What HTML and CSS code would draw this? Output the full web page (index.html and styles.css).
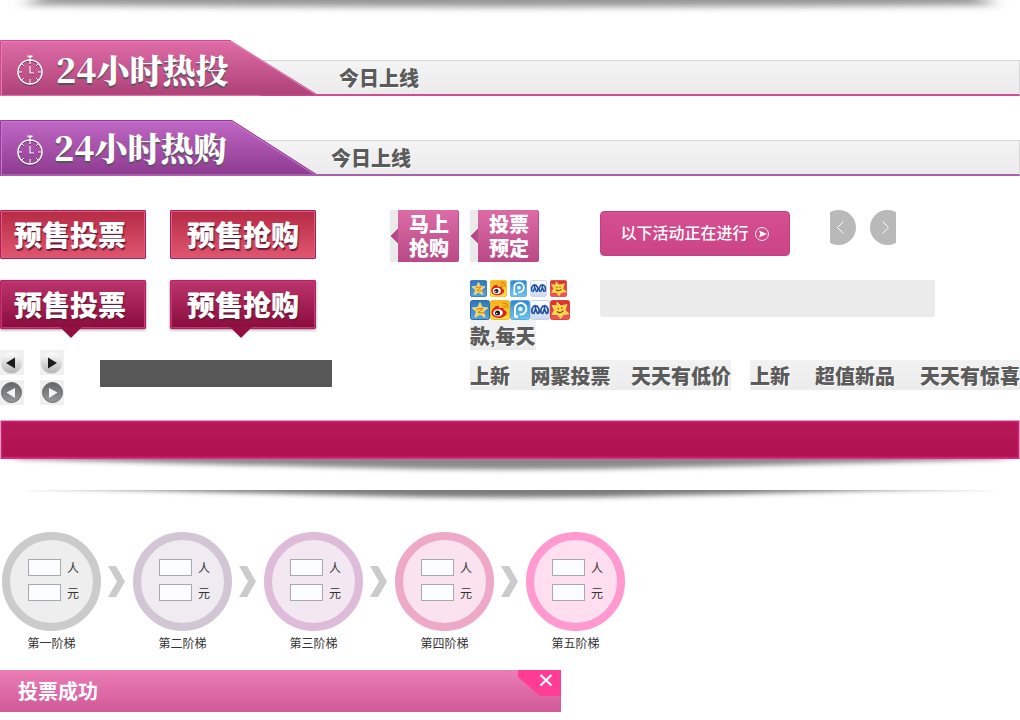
FILE: index.html
```html
<!DOCTYPE html>
<html lang="zh-CN">
<head>
<meta charset="utf-8">
<title>投票活动</title>
<link rel="stylesheet" href="styles.css">
</head>
<body>
<svg class="defs" aria-hidden="true">
  <defs>
    <linearGradient id="pink" x2="0" y2="1"><stop stop-color="#df6da7"/><stop offset="1" stop-color="#ae4178"/></linearGradient>
    <linearGradient id="purple" x2="0" y2="1"><stop stop-color="#c068c5"/><stop offset="1" stop-color="#8e3a90"/></linearGradient>
    <linearGradient id="blue" x2="0" y2="1"><stop stop-color="#2f76b8"/><stop offset="1" stop-color="#5ba3d8"/></linearGradient>
    <linearGradient id="sky" x2="0" y2="1"><stop stop-color="#2d86cf"/><stop offset="1" stop-color="#6fc6f0"/></linearGradient>
    <linearGradient id="yellow" x2="0" y2="1"><stop stop-color="#f5b01c"/><stop offset="1" stop-color="#ffe23a"/></linearGradient>
    <linearGradient id="red" x2="0" y2="1"><stop stop-color="#d9332b"/><stop offset="1" stop-color="#f0584e"/></linearGradient>
    <linearGradient id="pale" x2="0" y2="1"><stop stop-color="#fff"/><stop offset="1" stop-color="#c9d9f3"/></linearGradient>
    <linearGradient id="silver" x2="0" y2="1"><stop stop-color="#fff"/><stop offset="1" stop-color="#b4b4b4"/></linearGradient>
    <linearGradient id="steel" x2="0" y2="1"><stop stop-color="#666"/><stop offset="1" stop-color="#989898"/></linearGradient>
    <filter id="soft" x="-5%" y="-60%" width="110%" height="220%"><feGaussianBlur stdDeviation="9 3.5"/></filter>
    <filter id="thin" x="-5%" y="-60%" width="110%" height="220%"><feGaussianBlur stdDeviation="6 2.5"/></filter>
    <symbol id="watch" viewBox="0 0 28 32">
      <g fill="none" stroke="#fff">
        <circle cx="14" cy="18" r="12" stroke-width="1.500"/>
        <path d="M14 3v7M14 12v7h4" stroke-width="1.200"/>
        <path d="M14 25v4M3 18h3M22 18h3M6 10l2 2M22 10l-2 2M6 26l2-2M22 26l-2-2" stroke-width="1"/>
      </g>
      <path d="M11.500 1.500h5v2h-5z" fill="#fff"/>
    </symbol>
    <symbol id="qzone" viewBox="0 0 20 20">
      <rect x=".5" y=".5" width="19" height="19" rx="2" fill="url(#blue)" stroke="#2a6cab"/>
      <path d="M10 2.500l2.200 5 5.600.4-4.200 3.700 1.400 5.700-5-3-5 3 1.400-5.700L2.200 7.900l5.600-.4z" fill="#fdd04c" stroke="#fff0b0" stroke-width=".7"/>
      <path d="M6.500 9.300q4-1.400 6.500-.8l-5 4q3 .8 7 .2" fill="none" stroke="#c77c18"/>
    </symbol>
    <symbol id="weibo" viewBox="0 0 20 20">
      <rect x=".5" y=".5" width="19" height="19" rx="2" fill="url(#yellow)" stroke="#f3bd20"/>
      <path d="M1.500 12.500C1.500 9 6 5 8.300 5.800c1.200.4 1 1.600.600 2.500 2.200-.9 5.300-1 5 1.600 6 2 1.500 8-5.400 8-3.800 0-7-2.200-7-5.400z" fill="#d9231c"/>
      <ellipse cx="8" cy="12.800" rx="4.800" ry="3.600" fill="#fff"/><circle cx="7.500" cy="13" r="2.500" fill="#161616"/><circle cx="6.800" cy="13.500" r=".8" fill="#fff"/>
      <path d="M12.500 3.200c3.500-.7 6 1.800 5 5M13 6c1.500-.3 2.500.6 2.200 2" fill="none" stroke="#e58612" stroke-width="1.300"/>
    </symbol>
    <symbol id="tweet" viewBox="0 0 20 20">
      <rect x=".5" y=".5" width="19" height="19" rx="2" fill="url(#sky)" stroke="#5da9df"/>
      <path d="M5 16.500V9.500A5.700 5.700 0 1 1 10.500 14.500" fill="none" stroke="#fff" stroke-width="2" stroke-linecap="round"/>
      <circle cx="10.500" cy="9" r="2.300" fill="#dff3ff"/><circle cx="6.500" cy="16.500" r="1.500" fill="#fff"/>
    </symbol>
    <symbol id="friends" viewBox="0 0 20 20">
      <rect x=".5" y=".5" width="19" height="19" rx="2" fill="url(#pale)" stroke="#c3d1ec"/>
      <g fill="none" stroke="#1f4f9c" stroke-width="1.700" stroke-linecap="round">
        <path d="M4 6Q.8 9 2.300 13M5.500 5.500v3.500L3.900 13.500M5.500 9L7.600 13.500M7 6q3.200 3 1.800 7M13 6q-3 3-1.800 7M14.500 5.500v3.500L12.800 13.500M14.500 9L16.400 13.500M16 6q3.200 3 1.700 7"/>
      </g>
    </symbol>
    <symbol id="kaixin" viewBox="0 0 20 20">
      <rect x=".5" y=".5" width="19" height="19" rx="2" fill="url(#red)" stroke="#dc443c"/>
      <path d="M7 2l4 4 6-1.500-2 5.500 4 4-5.500.5L10.500 18.500 7.500 14.500 2 14.500 4.500 10 2 5.500l5 .3z" fill="#ffd83d" stroke="#ffe98a" stroke-width=".8" stroke-linejoin="round"/>
      <path d="M8.300 8v1.500M11.800 7.500V9M7 11.500q3.500 2.500 6.500-.8" fill="none" stroke="#7b3d08" stroke-width="1.200"/>
    </symbol>
    <symbol id="step-arrow" viewBox="0 0 17 31"><path d="M0 0h8l9 15.500L8 31H0l9-15.500z" fill="#cbcbcb"/></symbol>
  </defs>
</svg>

<svg class="shade shade-top" viewBox="0 0 1020 18" preserveAspectRatio="none" aria-hidden="true"><path d="M24 5Q50-10 100-14H920Q970-10 996 5Q750 7 510 7T24 5z" fill="#959595" filter="url(#soft)"/></svg>

<main>
  <section class="banner banner-pink">
    <div class="tab">
      <svg class="tab-bg" viewBox="0 0 320 56" aria-hidden="true"><path d="M.5 55.500V.5H231L319 55.500z" fill="url(#pink)"/><path d="M1.500 55V1.500H230.500L317 55.500" fill="none" stroke="#e57fb2"/><path d="M0 55h320M.5 55V.5H231" fill="none" stroke="#d4488b"/></svg>
      <svg class="watch" aria-hidden="true"><use href="#watch"/></svg>
      <h2>24小时热投</h2>
    </div>
    <div class="strip"><h3>今日上线</h3></div>
  </section>
  <section class="banner banner-purple">
    <div class="tab">
      <svg class="tab-bg" viewBox="0 0 320 56" aria-hidden="true"><path d="M.5 55.500V.5H232L318 55.500z" fill="url(#purple)" stroke="#963a9a"/><path d="M1.500 55V1.500H231.500L316 55.500" fill="none" stroke="#c47bc9"/><path d="M0 55h320" stroke="#a95fab" stroke-width="2"/></svg>
      <svg class="watch" aria-hidden="true"><use href="#watch"/></svg>
      <h2>24小时热购</h2>
    </div>
    <div class="strip"><h3>今日上线</h3></div>
  </section>

  <div class="board">
    <div class="left">
      <div class="pair"><button class="sale">预售投票</button><button class="sale">预售抢购</button></div>
      <div class="pair"><button class="sale sale-on">预售投票</button><button class="sale sale-on">预售抢购</button></div>
      <div class="tools">
        <div class="round-grid">
          <button class="round" aria-label="上一个"><svg viewBox="0 0 24 25"><circle cx="11.500" cy="13" r="10.500" fill="url(#silver)"/><path d="M15 7.500v11L6 13z" fill="#1c1c1c"/></svg></button>
          <button class="round" aria-label="下一个"><svg viewBox="0 0 24 25"><circle cx="11.500" cy="13" r="10.500" fill="url(#silver)"/><path d="M8 7.500v11L17 13z" fill="#1c1c1c"/></svg></button>
          <button class="round" aria-label="向前"><svg viewBox="0 0 24 25"><circle cx="11.500" cy="12.500" r="10" fill="url(#steel)" stroke="#6c6c6c"/><path d="M15 8v10L6.500 12.500z" fill="#f3f7f9"/></svg></button>
          <button class="round" aria-label="向后"><svg viewBox="0 0 24 25"><circle cx="12.500" cy="12.500" r="10" fill="url(#steel)" stroke="#6c6c6c"/><path d="M9 8v10l8.500-5.500z" fill="#f3f7f9"/></svg></button>
        </div>
        <div class="dark"></div>
      </div>
    </div>

    <div class="right">
      <div class="actions">
        <button class="mini">马上<br>抢购</button>
        <button class="mini">投票<br>预定</button>
        <button class="going">以下活动正在进行<svg viewBox="0 0 16 16" aria-hidden="true"><circle cx="8" cy="8" r="6.500" fill="none" stroke="#fff" stroke-width=".9"/><path d="M5 4.500l8 3.500-8 3.500L6.300 8z" fill="#fff"/></svg></button>
        <button class="page" aria-label="上一页"><svg viewBox="0 0 26 35"><circle cx="8.500" cy="17.500" r="17.500" fill="#b9b9b9"/><path d="M13.500 11.500L7.500 17.500l6 6" fill="none" stroke="#fff"/></svg></button>
        <button class="page" aria-label="下一页"><svg viewBox="0 0 26 35"><circle cx="17.500" cy="17.500" r="17.500" fill="#b9b9b9"/><path d="M12.500 11.500l6 6-6 6" fill="none" stroke="#fff"/></svg></button>
      </div>
      <div class="share">
        <div>
          <div class="icons small">
            <svg><use href="#qzone"/></svg><svg><use href="#weibo"/></svg><svg><use href="#tweet"/></svg><svg><use href="#friends"/></svg><svg><use href="#kaixin"/></svg>
          </div>
          <div class="icons">
            <svg><use href="#qzone"/></svg><svg><use href="#weibo"/></svg><svg><use href="#tweet"/></svg><svg><use href="#friends"/></svg><svg><use href="#kaixin"/></svg>
          </div>
          <span class="caption">款,每天</span>
        </div>
        <div class="light"></div>
      </div>
      <div class="slogans">
        <p class="caption"><span>上新</span><span>网聚投票</span><span>天天有低价</span></p>
        <p class="caption"><span>上新</span><span>超值新品</span><span>天天有惊喜</span></p>
      </div>
    </div>
  </div>

  <div class="nav-bar"></div>
  <svg class="shade shade-nav" viewBox="0 0 1020 20" preserveAspectRatio="none" aria-hidden="true"><path d="M15-14V0Q150 4 330 8Q510 13 690 8Q870 4 1005 0V-14z" fill="#8a8a8a" filter="url(#thin)"/></svg>
  <svg class="shade" viewBox="0 0 1020 18" preserveAspectRatio="none" aria-hidden="true"><path d="M30-14V-3Q170 1 330 5Q510 10 690 5Q850 1 990-3V-14z" fill="#7c7c7c" filter="url(#thin)"/></svg>

  <ol class="steps">
    <li class="step s1"><div class="disc"><label><input type="text">人</label><label><input type="text">元</label></div><p>第一阶梯</p><svg aria-hidden="true"><use href="#step-arrow"/></svg></li>
    <li class="step s2"><div class="disc"><label><input type="text">人</label><label><input type="text">元</label></div><p>第二阶梯</p><svg aria-hidden="true"><use href="#step-arrow"/></svg></li>
    <li class="step s3"><div class="disc"><label><input type="text">人</label><label><input type="text">元</label></div><p>第三阶梯</p><svg aria-hidden="true"><use href="#step-arrow"/></svg></li>
    <li class="step s4"><div class="disc"><label><input type="text">人</label><label><input type="text">元</label></div><p>第四阶梯</p><svg aria-hidden="true"><use href="#step-arrow"/></svg></li>
    <li class="step s5"><div class="disc"><label><input type="text">人</label><label><input type="text">元</label></div><p>第五阶梯</p></li>
  </ol>

  <header class="dialog">
    <h2>投票成功</h2>
    <button class="close" aria-label="关闭"><svg viewBox="0 0 43 26"><path d="M0 0h43v26H22L0 7z" fill="#ff3d97"/><path d="M22.500 5l11 10.500M33.500 5l-11 10.500" stroke="#fff" stroke-width="2.200"/></svg></button>
  </header>
</main>
</body>
</html>
```
FILE: styles.css
```css
* { box-sizing: border-box; }
body {
  margin: 0;
  background: #fff;
  color: #333;
  font-family: "Liberation Sans", "Noto Sans CJK SC", sans-serif;
  font-size: 12px;
}
h2, h3, p, ol { margin: 0; padding: 0; list-style: none; }
button { padding: 0; border: 0; background: none; color: #fff; font-family: inherit; cursor: pointer; }
svg { display: block; }
.defs { position: absolute; width: 0; height: 0; }

.shade { width: 100%; height: 18px; overflow: hidden; }
.shade-top { margin-bottom: 22px; }
.shade-nav { height: 20px; margin-bottom: 11px; }

.banner { display: flex; align-items: flex-end; height: 56px; margin-bottom: 24px; }
.tab { position: relative; z-index: 1; display: flex; width: 320px; height: 56px; padding-left: 16px; }
.tab-bg { position: absolute; inset: 0; width: 320px; height: 56px; }
.watch { position: relative; width: 28px; height: 32px; margin-top: 14px; filter: drop-shadow(0 1px 0 #0006); }
.tab h2 {
  position: relative;
  margin-left: 12px;
  color: #fff;
  font-family: "Noto Serif CJK SC", "Noto Sans CJK SC", serif;
  font-size: 33px;
  font-weight: 900;
  line-height: 58px;
  white-space: nowrap;
  text-shadow: 0 2px 1px #555;
}
.banner-purple h2 { margin-left: 10px; line-height: 54px; }
.strip {
  flex: 1;
  height: 36px;
  margin-left: -60px;
  padding-left: 78px;
  border: 1px solid #d8d8d8;
  border-bottom: 2px solid #d04d8f;
  background: linear-gradient(#f4f4f4, #ebebeb);
}
.banner-purple .strip { padding-left: 70px; border-bottom-color: #a95fab; }
.strip h3, .caption {
  color: #5b5b5b;
  font-size: 20px;
  font-weight: 900;
  line-height: 36px;
  text-shadow: 1px 1px 0 #fff;
  white-space: nowrap;
}

.board { display: grid; grid-template-columns: 390px 1fr; height: 200px; margin: 34px 0 10px; }
.pair { display: flex; gap: 24px; margin-bottom: 21px; }
.sale {
  position: relative;
  width: 146px;
  height: 49px;
  padding: 4px 6px 0 0;
  border: 1px solid #b51855;
  border-radius: 1px;
  background: linear-gradient(#b52b45, #e0566e);
  box-shadow: inset 0 0 0 1px #d95f7d;
  font-size: 28px;
  font-weight: 900;
  line-height: 43px;
  text-shadow: 1px 2px 1px #6b1a35;
}
.sale:last-child { padding-right: 0; }
.sale-on {
  border-color: #c2185f;
  background: linear-gradient(#bb346c, #8b0c3d);
  box-shadow: inset 0 0 0 1px #b93d76, 0 1px 3px #0006;
}
.sale-on::after {
  content: "";
  position: absolute;
  top: 46px;
  left: 59px;
  width: 22px;
  height: 11px;
  background: #940f43;
  clip-path: polygon(0 0, 100% 0, 50% 100%);
}
.tools { display: flex; gap: 36px; }
.round-grid { display: grid; grid-template-columns: 24px 24px; gap: 5px 16px; }
.round { width: 24px; height: 25px; background: #f0f0f0; }
.dark { width: 232px; height: 27px; margin-top: 10px; background: #575757; }

.right { display: grid; grid-template-rows: 70px 80px 30px; min-width: 0; }
.actions { display: flex; align-items: flex-start; }
.mini {
  width: 69px;
  height: 52px;
  margin-right: 11px;
  padding: 2px 0 0 9px;
  background:
    conic-gradient(from 45deg at 0 50%, #b94a87 90deg, transparent 0) 0 0 / 8px 52px no-repeat,
    linear-gradient(#dc6ba6, #b94a87) 8px 0 / 61px 52px no-repeat,
    #ebebeb;
  box-shadow: inset -1px 0 0 #c24c86;
  border-radius: 0 2px 2px 0;
  font-size: 20px;
  font-weight: 900;
  line-height: 24px;
}
.going {
  display: flex;
  align-items: center;
  justify-content: center;
  gap: 5px;
  width: 190px;
  height: 45px;
  margin: 1px 40px 0 50px;
  border: 1px solid #bd4380;
  border-radius: 4px;
  background: linear-gradient(#d54f90, #ca4487);
  font-size: 16px;
  font-weight: 500;
  line-height: 24px;
  white-space: nowrap;
}
.going svg { width: 16px; height: 16px; }
.page { width: 26px; height: 35px; margin-right: 14px; }
.share { display: flex; justify-content: space-between; width: 465px; margin-left: 80px; }
.icons { display: grid; grid-template-columns: repeat(5, 20px); }
.icons svg { width: 20px; height: 20px; }
.icons.small svg { width: 17px; height: 17px; margin-bottom: 3px; }
.caption { height: 30px; background: linear-gradient(#f2f2f2, #ececec); line-height: 34px; }
.share .caption { display: block; width: max-content; }
.light { width: 335px; height: 37px; border-radius: 0 0 3px 3px; background: #ebebeb; }
.slogans { display: flex; justify-content: space-between; margin-left: 80px; }
.slogans p { display: flex; justify-content: space-between; width: 261px; }
.slogans p:last-child { width: 270px; }

.nav-bar {
  height: 39px;
  border: 1px solid #d8a5bd;
  border-bottom-color: #e22a86;
  background: linear-gradient(#b81857, #ae114d);
  box-shadow: inset 0 0 0 1px #d51d76, inset 0 0 1px 2px #c0175f;
}

.steps { display: flex; gap: 32px; margin: 24px 0 16px 2px; }
.step { position: relative; width: 99px; }
.step > svg { position: absolute; top: 34px; left: 106px; width: 17px; height: 31px; }
.disc { height: 99px; padding: 19px 0 0 18px; border: 8px solid; border-radius: 50%; }
.disc label { display: flex; align-items: center; gap: 6px; height: 17px; margin-bottom: 8px; }
.disc input { width: 33px; height: 17px; padding: 0 2px; border: 1px solid #a9a9a9; background: #fafcff; font-size: 12px; }
.step p { line-height: 20px; margin-top: 3px; text-align: center; }
.s1 .disc { border-color: #cbcbcb; background: #eee; }
.s2 .disc { border-color: #d2c6d4; background: #f0eaf1; }
.s3 .disc { border-color: #ddbbd9; background: #f3e7f2; }
.s4 .disc { border-color: #eda9c7; background: #fae2ee; }
.s5 .disc { border-color: #ff99cf; background: #ffdeef; }

.dialog {
  display: flex;
  justify-content: space-between;
  align-items: flex-start;
  width: 561px;
  max-width: 100%;
  height: 42px;
  padding-left: 18px;
  background: linear-gradient(#eb7db6, #d15998);
}
.dialog h2 { color: #fff; font-size: 20px; font-weight: 700; line-height: 44px; }
.close svg { width: 43px; height: 26px; }
```
